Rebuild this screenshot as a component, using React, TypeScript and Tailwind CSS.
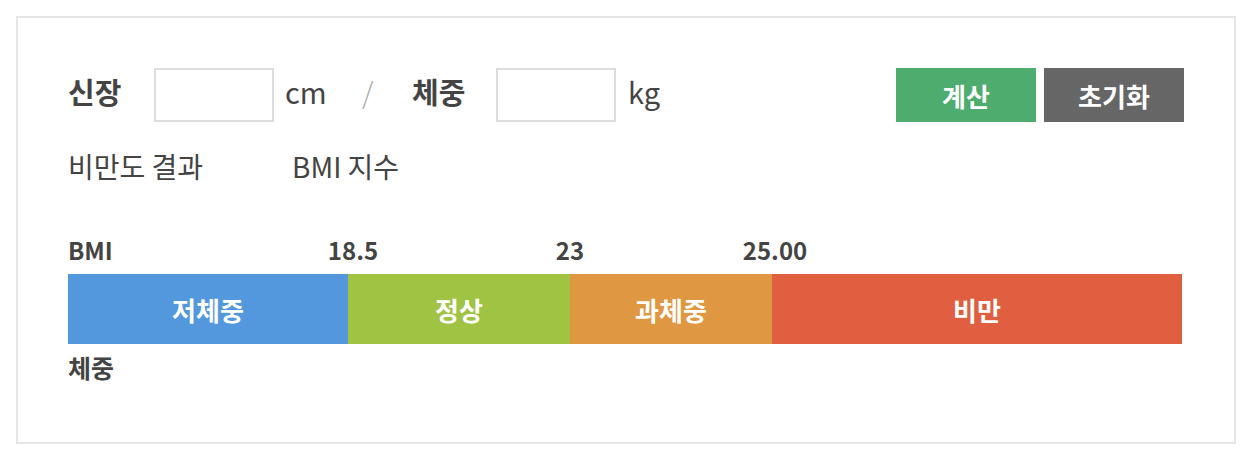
const font = { fontFamily: '"Noto Sans CJK KR", "Noto Sans", sans-serif' };

const segments = [
  { label: "저체중", width: "w-[280px]", color: "bg-[#5398dd]", mark: "18.5", shift: "pl-[10px]" },
  { label: "정상", width: "w-[222px]", color: "bg-[#a1c344]", mark: "23", shift: "" },
  { label: "과체중", width: "w-[202px]", color: "bg-[#e09742]", mark: "25.00", shift: "pl-[6px]" },
  { label: "비만", width: "w-[410px]", color: "bg-[#e05f40]", mark: "", shift: "" },
];

export default function App() {
  return (
    <div className="bg-white w-[1256px] h-[460px] pt-4 pl-4" style={font}>
      <div className="w-[1220px] h-[428px] border-2 border-[#e5e5e5] p-[50px] text-[#444]">
        {/* 입력 줄 */}
        <div className="flex items-center h-[54px]">
          <span className="w-[86px] mb-[6px] text-[29px] font-bold">신장</span>
          <input className="w-[120px] h-[54px] border-2 border-[#dddddd] outline-none" />
          <span className="ml-[11px] mb-[6px] w-[77px] text-[29px]">cm</span>
          <span className="w-[50px] mb-[6px] text-[29px] font-light text-[#aaa]">/</span>
          <span className="w-[84px] mb-[6px] text-[29px] font-bold">체중</span>
          <input className="w-[120px] h-[54px] border-2 border-[#dddddd] outline-none" />
          <span className="ml-[12px] mb-[6px] text-[29px]">kg</span>
          <div className="ml-auto flex gap-2">
            <button className="w-[140px] h-[54px] bg-[#4fac6f] text-white text-[26px] font-bold">계산</button>
            <button className="w-[140px] h-[54px] bg-[#666666] text-white text-[26px] font-bold">초기화</button>
          </div>
        </div>

        <div className="mt-[22px] h-[44px] flex items-center text-[28px]">
          <span className="w-[224px]">비만도 결과</span>
          <span>BMI 지수</span>
        </div>

        {/* 기준선 */}
        <div className="mt-[47px] h-[30px] flex items-center text-[24px] font-bold">
          {segments.map((s, i) => (
            <div key={s.label} className={`${s.width} flex justify-end h-full items-center`}>
              {i === 0 && <span className="mr-auto">BMI</span>}
              {s.mark && <span className={`${s.shift} translate-x-1/2`}>{s.mark}</span>}
            </div>
          ))}
        </div>

        <div className="mt-[9px] flex h-[70px]">
          {segments.map((s) => (
            <div
              key={s.label}
              className={`${s.width} ${s.color} flex items-center justify-center text-white text-[26px] font-bold`}
            >
              {s.label}
            </div>
          ))}
        </div>

        <div className="mt-[9px] h-[30px] flex items-center text-[25px] font-bold">체중</div>
      </div>
    </div>
  );
}
